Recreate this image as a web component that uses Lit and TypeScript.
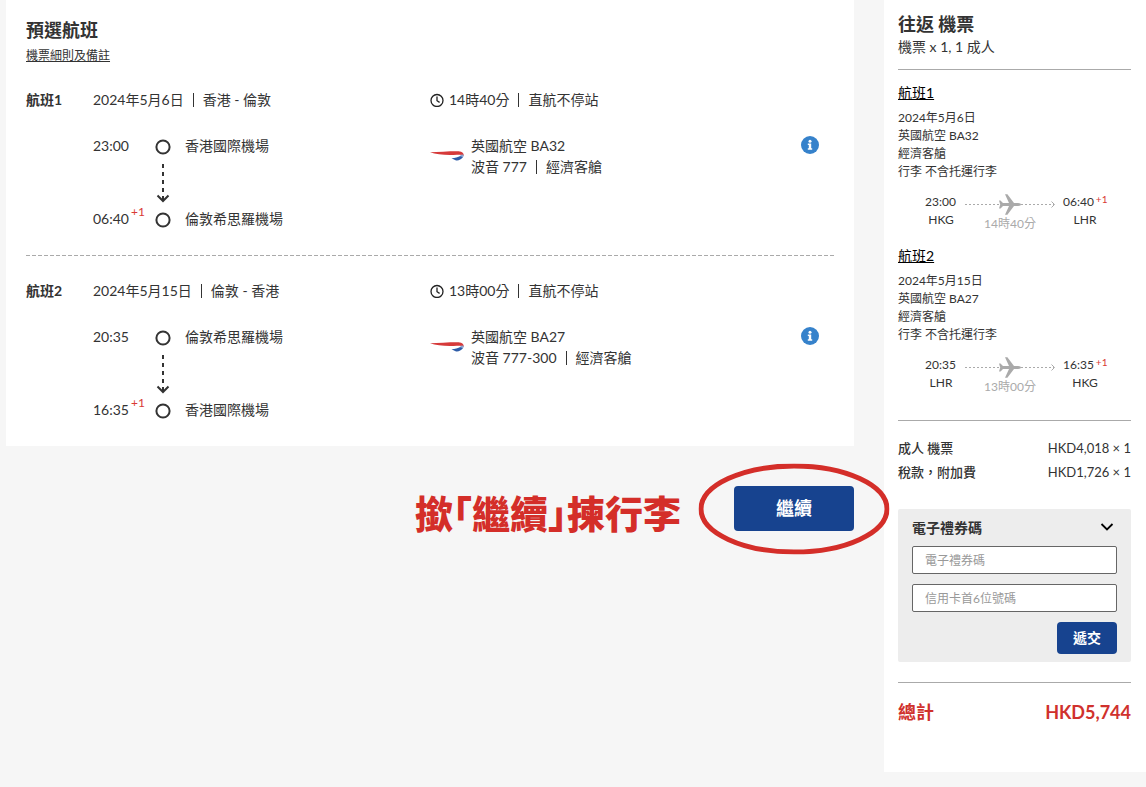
import { LitElement, html, css, svg } from "lit";
import { customElement, property } from "lit/decorators.js";

interface Flight {
  name: string;
  date: string;
  route: string;
  duration: string;
  airline: string;
  aircraft: string;
  departTime: string;
  arriveTime: string;
  departAirport: string;
  arriveAirport: string;
  departCode: string;
  arriveCode: string;
}

const FLIGHTS: Flight[] = [
  {
    name: "航班1",
    date: "2024年5月6日",
    route: "香港 - 倫敦",
    duration: "14時40分",
    airline: "英國航空 BA32",
    aircraft: "波音 777",
    departTime: "23:00",
    arriveTime: "06:40",
    departAirport: "香港國際機場",
    arriveAirport: "倫敦希思羅機場",
    departCode: "HKG",
    arriveCode: "LHR",
  },
  {
    name: "航班2",
    date: "2024年5月15日",
    route: "倫敦 - 香港",
    duration: "13時00分",
    airline: "英國航空 BA27",
    aircraft: "波音 777-300",
    departTime: "20:35",
    arriveTime: "16:35",
    departAirport: "倫敦希思羅機場",
    arriveAirport: "香港國際機場",
    departCode: "LHR",
    arriveCode: "HKG",
  },
];

const stop = svg`<circle cx="8" cy="8" r="6.6" fill="none" stroke="#333" stroke-width="2"/>`;

@customElement("flight-detail")
export class FlightDetail extends LitElement {
  @property({ attribute: false }) flight!: Flight;

  static styles = css`
    :host {
      display: block;
      font-size: 14px;
      line-height: 21px;
    }
    .head,
    .body {
      display: grid;
      grid-template-columns: 67px 337px 1fr;
    }
    .body {
      margin-top: 25px;
    }
    h2 {
      margin: 0;
      font-size: 14px;
      line-height: 21px;
      font-weight: 700;
    }
    .pair,
    .length {
      display: flex;
      align-items: center;
    }
    .bar {
      width: 1px;
      height: 14px;
      margin: 0 9px;
      background: #333;
    }
    .clock {
      width: 14px;
      height: 14px;
      margin-right: 5px;
    }
    .legs {
      grid-column: 2;
      display: grid;
      grid-template-columns: 62px 30px 1fr;
      grid-template-rows: 21px 52px 21px;
    }
    .mark {
      width: 16px;
      height: 16px;
      margin-top: 4px;
    }
    .arrow {
      grid-column: 2;
      width: 16px;
      height: 40px;
      margin-top: 8px;
    }
    .arrive {
      grid-column: 1;
      display: flex;
      height: 21px;
      white-space: nowrap;
    }
    .plus {
      margin: -2px 0 0 2px;
      font-size: 12px;
      line-height: 12px;
      color: #d93a35;
    }
    .carrier {
      display: flex;
      align-items: flex-start;
    }
    .logo {
      width: 34px;
      height: 10px;
      margin: 16px 7px 0 0;
    }
    .info {
      width: 18px;
      height: 18px;
      margin: 1px 15px 0 auto;
      padding: 0;
      border: 0;
      background: none;
      cursor: pointer;
    }
    .info svg {
      display: block;
    }
  `;

  render() {
    const f = this.flight;
    return html`
      <div class="head">
        <h2>${f.name}</h2>
        <div class="pair"><span>${f.date}</span><i class="bar"></i><span>${f.route}</span></div>
        <div class="length">
          <svg class="clock" viewBox="0 0 14 14" fill="none" stroke="#222" stroke-width="1.3" stroke-linecap="round">
            <circle cx="7" cy="7.500" r="6" />
            <path d="M7 3.900V7.700L9.200 9.100" />
          </svg>
          <span>${f.duration}</span><i class="bar"></i><span>直航不停站</span>
        </div>
      </div>
      <div class="body">
        <div class="legs">
          <span>${f.departTime}</span>
          <svg class="mark" viewBox="0 0 16 16">${stop}</svg>
          <span>${f.departAirport}</span>
          <svg class="arrow" viewBox="0 0 16 40" fill="none" stroke="#333" stroke-width="2">
            <path d="M8 0V36" stroke-dasharray="4 4" />
            <path d="M2.500 31.500L8 37L13.500 31.500" />
          </svg>
          <span class="arrive">${f.arriveTime}<span class="plus">+1</span></span>
          <svg class="mark" viewBox="0 0 16 16">${stop}</svg>
          <span>${f.arriveAirport}</span>
        </div>
        <div class="carrier">
          <svg class="logo" viewBox="0 0 34 10">
            <path d="M0 1.200C8 1 18 .3 27 .3C32 .3 34.300 2.200 33.600 5C32.500 4 30.500 3.600 27 3.700C17 4.200 7 3.800 0 1.200Z" fill="#d63a3a" />
            <path d="M31.500 3.500C33.500 3.200 34 4 33.600 5.400L31.500 6.600L28.500 6.200Z" fill="#8ea6d0" />
            <path d="M21.500 7.300C25 7.300 28 5.800 30.500 5.200L33 6.300C31 8.800 28 9.900 25.500 9.200Z" fill="#2e5ca8" />
          </svg>
          <div>
            <div>${f.airline}</div>
            <div class="pair"><span>${f.aircraft}</span><i class="bar"></i><span>經濟客艙</span></div>
          </div>
          <button class="info" type="button" aria-label="${f.airline}">
            <svg width="18" height="18" viewBox="0 0 18 18">
              <circle cx="9" cy="9" r="9" fill="#3682cb" />
              <circle cx="9" cy="5.300" r="1.500" fill="#fff" />
              <path d="M6.800 7.600H10.200V12.200H11.200V13.700H6.800V12.200H7.800V9.100H6.800Z" fill="#fff" />
            </svg>
          </button>
        </div>
      </div>
    `;
  }
}

@customElement("flight-summary")
export class FlightSummary extends LitElement {
  @property({ attribute: false }) flight!: Flight;

  static styles = css`
    :host {
      display: block;
      font-size: 12px;
      line-height: 18px;
    }
    h3 {
      margin: 0 0 6px;
      font-size: 14px;
      line-height: 20px;
      font-weight: 400;
      color: #000;
      text-decoration: underline;
    }
    .path {
      display: grid;
      grid-template-columns: 32px 90px 44px;
      justify-content: center;
      column-gap: 8px;
      margin-top: 12px;
      padding-left: 3px;
      text-align: center;
    }
    .time {
      display: flex;
      white-space: nowrap;
    }
    .plus {
      margin: -3px 0 0 2px;
      font-size: 10px;
      color: #d93a35;
    }
    .code {
      display: block;
    }
    .mid {
      color: #aaa;
    }
    .mid svg {
      display: block;
      width: 100%;
      height: 22px;
    }
  `;

  render() {
    const f = this.flight;
    return html`
      <h3>${f.name}</h3>
      <div>${f.date}</div>
      <div>${f.airline}</div>
      <div>經濟客艙</div>
      <div>行李 不含托運行李</div>
      <div class="path">
        <div>
          <span class="time">${f.departTime}</span>
          <span class="code">${f.departCode}</span>
        </div>
        <div class="mid">
          <svg viewBox="1 0 90 22" fill="none" stroke="#aaa">
            <path d="M1 11.500H90" stroke-dasharray="2 2" />
            <path d="M87.500 8.500L90.500 11.500L87.500 14.500" />
            <path
              d="M35 7.500H36.500L39 10H45L41 1.200H43.400L50 10H54C56.200 10 57 10.900 57 11.500C57 12.100 56.200 13 54 13H50L43.400 21.800H41L45 13H39L36.500 15.500H35L36.200 11.500Z"
              fill="#aaa" stroke="none" />
          </svg>
          <div>${f.duration}</div>
        </div>
        <div>
          <span class="time">${f.arriveTime}<span class="plus">+1</span></span>
          <span class="code">${f.arriveCode}</span>
        </div>
      </div>
    `;
  }
}

@customElement("app-root")
export class AppRoot extends LitElement {
  static styles = css`
    :host {
      display: block;
      min-height: 100vh;
      background: #f6f6f6;
      color: #333;
      font-family: Lato, "Noto Sans CJK TC", sans-serif;
    }
    * {
      box-sizing: border-box;
    }
    button,
    input {
      font-family: inherit;
    }
    .page {
      display: grid;
      grid-template-columns: minmax(0, 1fr) 262px;
      column-gap: 30px;
      align-items: start;
      padding-left: 6px;
    }
    .card {
      padding: 18px 20px 26px;
      background: #fff;
    }
    h1 {
      margin: 0;
      font-size: 18px;
      line-height: 24px;
      font-weight: 700;
    }
    .rules {
      display: block;
      width: max-content;
      margin: 5px 0 24px;
      font-size: 12px;
      line-height: 18px;
      color: #333;
    }
    .divider {
      height: 1px;
      margin: 26px 0 24px;
      background: repeating-linear-gradient(90deg, #aaa 0 4px, transparent 4px 6px);
    }
    .actions {
      display: flex;
      justify-content: flex-end;
      align-items: center;
      gap: 53px;
      margin-top: 35px;
    }
    .note {
      padding-top: 10px;
      font-size: 38px;
      line-height: 45px;
      font-weight: 900;
      font-feature-settings: "halt";
      color: #d42e29;
      white-space: nowrap;
    }
    .target {
      position: relative;
    }
    .ring {
      position: absolute;
      left: 50%;
      top: 50%;
      width: 191px;
      height: 91px;
      transform: translate(-50%, -50%);
      pointer-events: none;
    }
    .next,
    .submit {
      border: 0;
      border-radius: 4px;
      background: #17438f;
      color: #fff;
      font-weight: 700;
      cursor: pointer;
    }
    .next {
      display: block;
      width: 120px;
      height: 45px;
      padding: 0 0 3px;
      font-size: 18px;
    }
    .side {
      padding: 12px 15px 48px 14px;
      background: #fff;
    }
    .party {
      font-size: 14px;
      line-height: 22px;
      padding-bottom: 11px;
      border-bottom: 1px solid #aaa;
    }
    flight-summary {
      margin-top: 13px;
    }
    .fares {
      margin: 24px 0 0;
      padding-top: 15px;
      border-top: 1px solid #aaa;
      font-size: 13px;
      line-height: 24px;
    }
    .row {
      display: flex;
      justify-content: space-between;
    }
    .row dt {
      font-weight: 500;
    }
    .row dd {
      margin: 0;
    }
    .voucher {
      margin-top: 25px;
      padding: 7px 14px 8px;
      border-radius: 2px;
      background: #ededed;
    }
    .fold {
      display: flex;
      justify-content: space-between;
      align-items: center;
      width: 100%;
      height: 22px;
      padding: 0 3px 0 0;
      border: 0;
      background: none;
      color: #333;
      font-size: 14px;
      font-weight: 700;
    }
    .field {
      display: block;
      width: 100%;
      height: 28px;
      margin: 8px 0 10px;
      padding: 0 12px;
      border: 1px solid #666;
      border-radius: 2px;
      background: #fff;
      font-size: 12px;
    }
    .field::placeholder {
      color: #999;
    }
    .submit {
      display: block;
      width: 60px;
      height: 32px;
      margin-left: auto;
      padding: 0 0 2px;
      font-size: 14px;
    }
    .total {
      display: flex;
      justify-content: space-between;
      margin-top: 20px;
      padding-top: 17px;
      border-top: 1px solid #aaa;
      font-size: 18px;
      line-height: 24px;
      font-weight: 700;
      color: #d0312d;
    }
  `;

  render() {
    return html`
      <div class="page">
        <main>
          <section class="card">
            <h1>預選航班</h1>
            <a class="rules" href="#rules">機票細則及備註</a>
            <flight-detail .flight=${FLIGHTS[0]}></flight-detail>
            <div class="divider"></div>
            <flight-detail .flight=${FLIGHTS[1]}></flight-detail>
          </section>
          <div class="actions">
            <div class="note">撳「繼續」揀行李</div>
            <div class="target">
              <button class="next" type="button">繼續</button>
              <svg class="ring" viewBox="0 0 191 91">
                <ellipse cx="95.500" cy="45.500" rx="93" ry="43" fill="none" stroke="#d42e29" stroke-width="5" />
              </svg>
            </div>
          </div>
        </main>
        <aside class="side">
          <h1>往返 機票</h1>
          <div class="party">機票 x 1, 1 成人</div>
          ${FLIGHTS.map((f) => html`<flight-summary .flight=${f}></flight-summary>`)}
          <dl class="fares">
            <div class="row"><dt>成人 機票</dt><dd>HKD4,018 × 1</dd></div>
            <div class="row"><dt>稅款，附加費</dt><dd>HKD1,726 × 1</dd></div>
          </dl>
          <form class="voucher" @submit=${(e: Event) => e.preventDefault()}>
            <button class="fold" type="button" aria-expanded="true">
              <span>電子禮券碼</span>
              <svg width="14" height="10" viewBox="0 0 14 10" fill="none" stroke="#000" stroke-width="1.800">
                <path d="M1.500 2L7 7.500L12.500 2" />
              </svg>
            </button>
            <input class="field" type="text" aria-label="電子禮券碼" placeholder="電子禮券碼" />
            <input class="field" type="text" aria-label="信用卡首6位號碼" placeholder="信用卡首6位號碼" />
            <button class="submit" type="submit">遞交</button>
          </form>
          <div class="total"><span>總計</span><span>HKD5,744</span></div>
        </aside>
      </div>
    `;
  }
}
